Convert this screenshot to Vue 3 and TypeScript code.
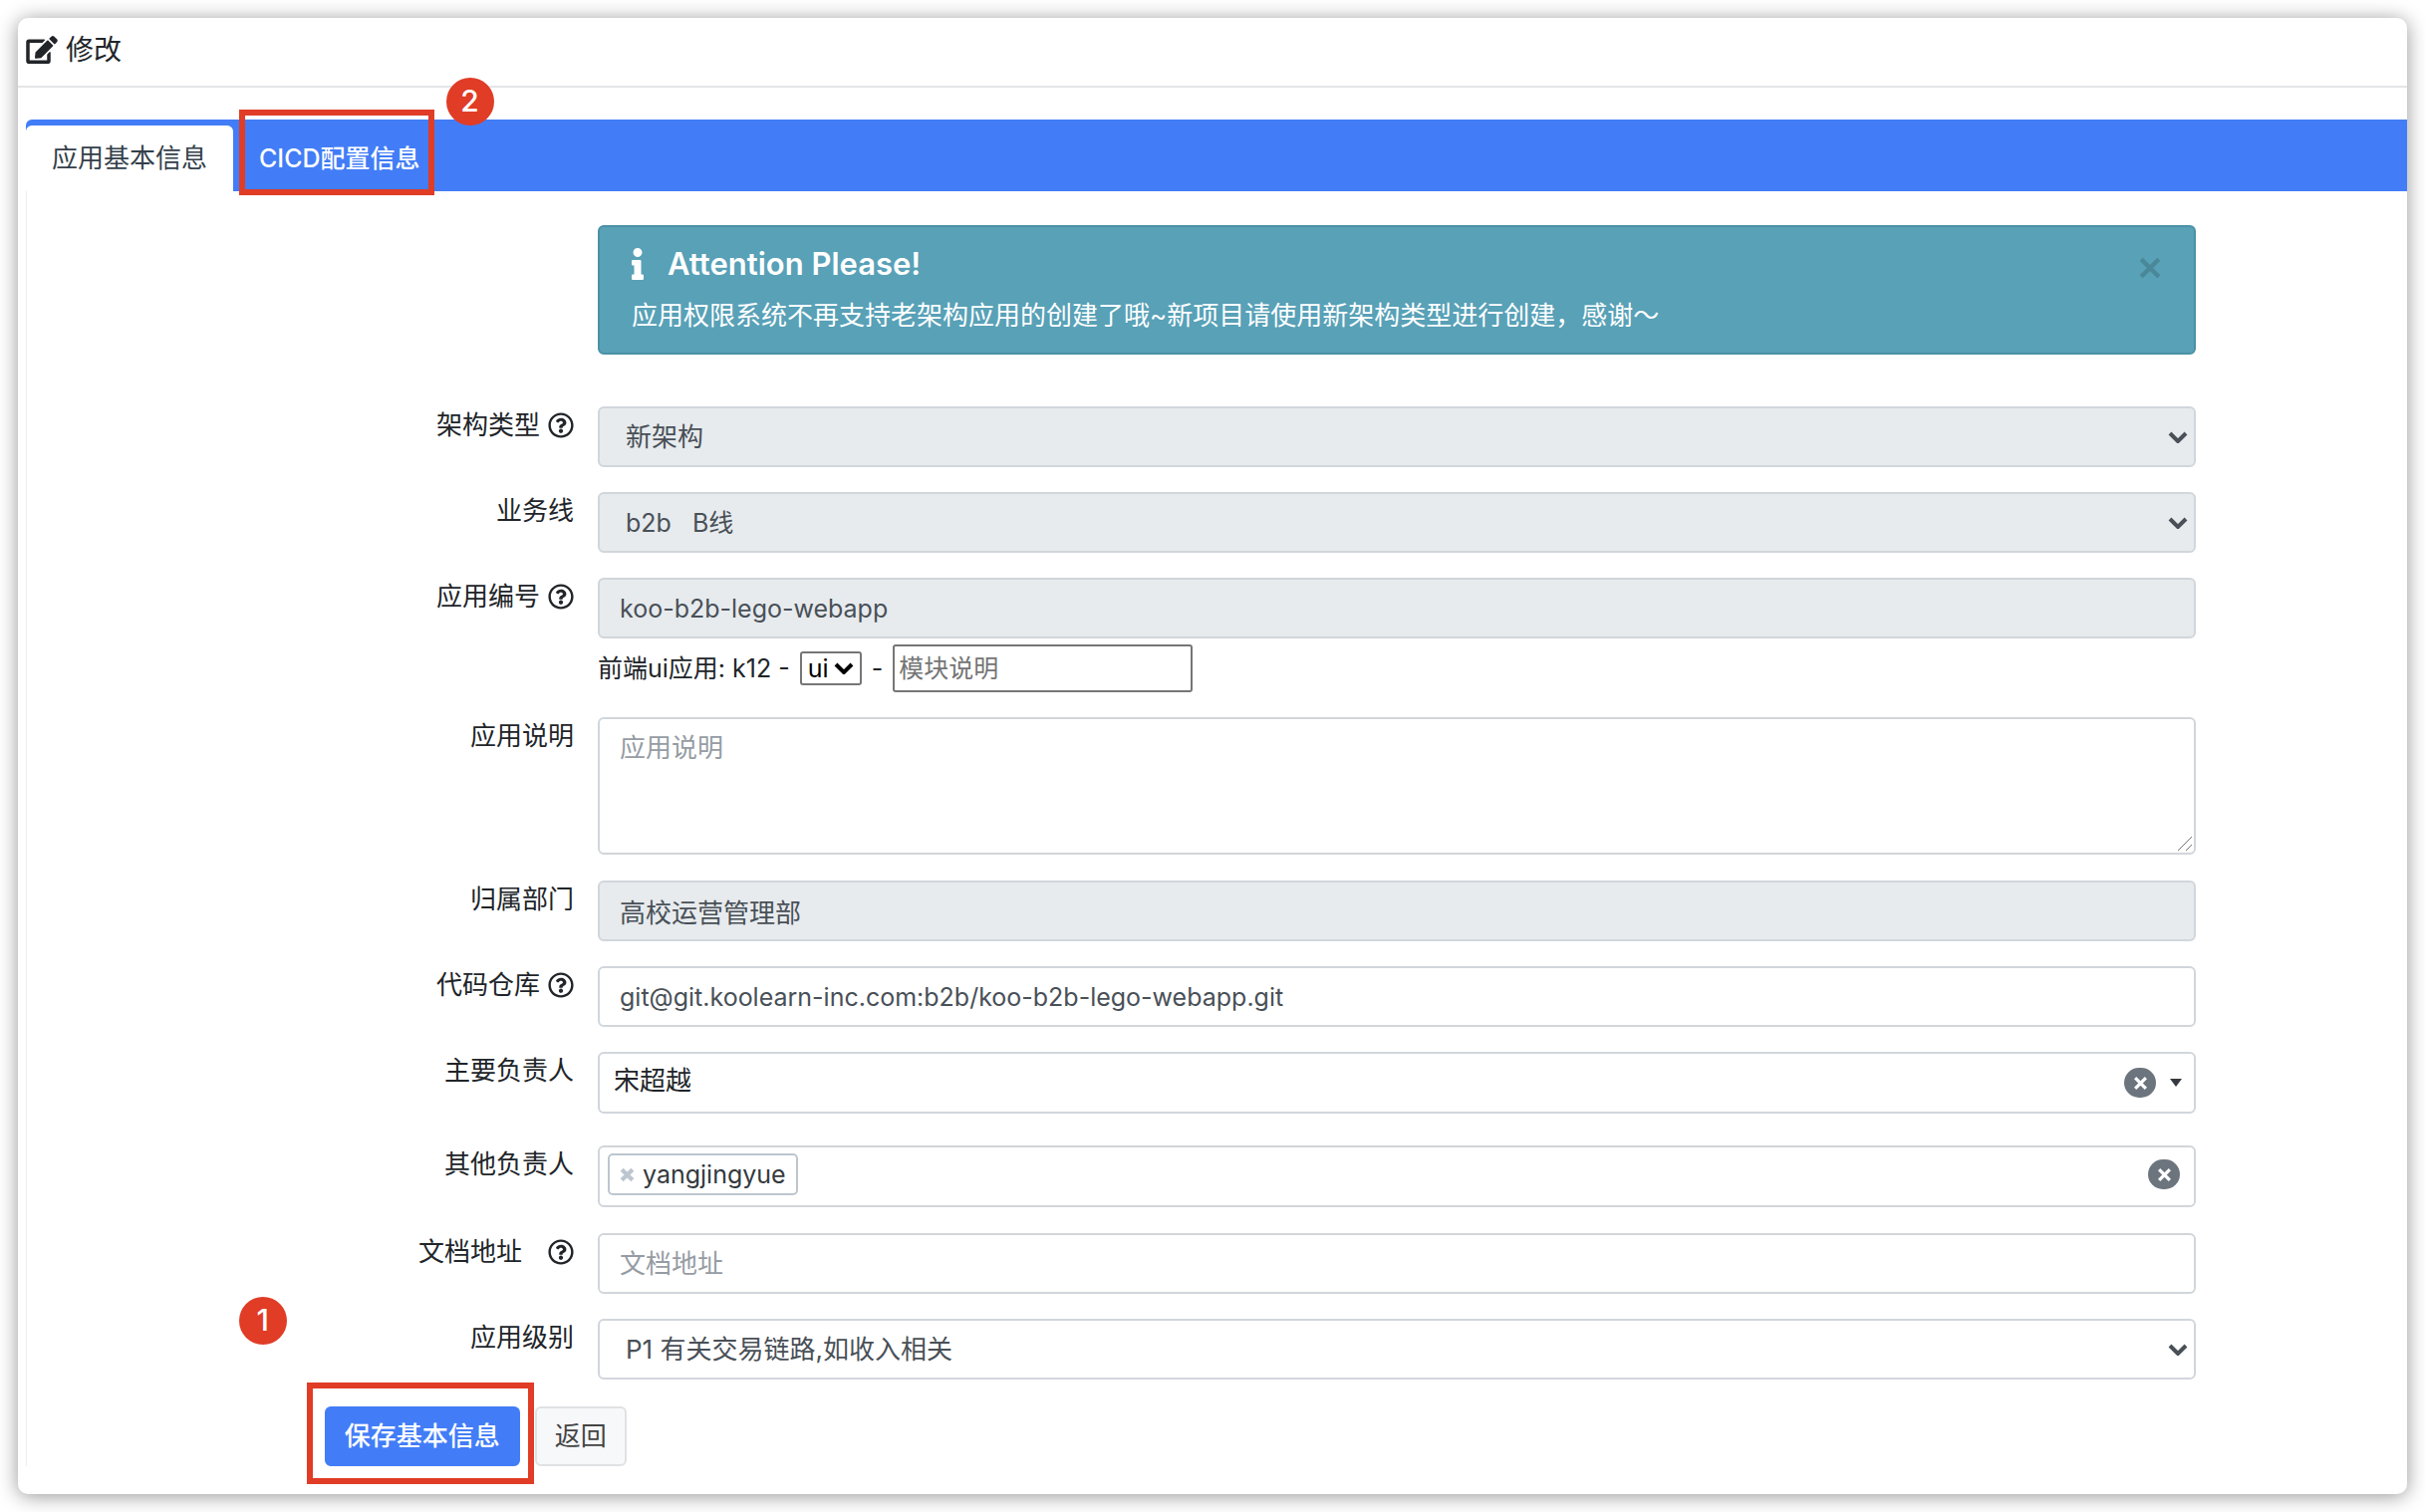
<script setup lang="ts">
import { ref } from 'vue'

const activeTab = ref<'basic' | 'cicd'>('basic')
const alertVisible = ref(true)

const archType = ref('new')
const bizLine = ref('b2b')
const appCode = ref('koo-b2b-lego-webapp')
const uiType = ref('ui')
const moduleName = ref('')
const description = ref('')
const department = ref('高校运营管理部')
const repository = ref('git@git.koolearn-inc.com:b2b/koo-b2b-lego-webapp.git')
const owner = ref('宋超越')
const otherOwners = ref<string[]>(['yangjingyue'])
const ownerQuery = ref('')
const docUrl = ref('')
const level = ref('P1')

const helpIcon =
  'M256 8C119 8 8 119 8 256s111 248 248 248 248-111 248-248S393 8 256 8zm0 448c-111 0-200-90-200-200S145 56 256 56s200 89 200 200-89 200-200 200zm107-255c0 67-72 68-72 93v6c0 7-5 12-12 12h-46c-7 0-12-5-12-12v-9c0-35 27-49 47-60 17-10 28-17 28-30 0-17-22-29-40-29-23 0-34 11-49 30-4 5-12 6-17 2l-28-21c-5-4-6-11-3-16 24-35 54-55 102-55 50 0 102 39 102 89zm-65 167c0 23-19 42-42 42s-42-19-42-42 19-42 42-42 42 19 42 42z'

function removeOwner(name: string): void {
  otherOwners.value = otherOwners.value.filter((item) => item !== name)
}
</script>

<template>
  <main class="card">
    <header class="card-header">
      <svg class="edit-icon" viewBox="0 0 576 512" aria-hidden="true">
        <path
          d="M402.600 83.200l90.200 90.200c3.800 3.800 3.800 10 0 13.800L274.400 405.600l-92.800 10.300c-12.400 1.400-22.900-9.100-21.500-21.500l10.300-92.800L388.800 83.200c3.800-3.800 10-3.800 13.800 0zm162-22.900l-48.800-48.800c-15.200-15.200-39.900-15.200-55.200 0l-35.400 35.400c-3.800 3.800-3.800 10 0 13.800l90.200 90.200c3.800 3.800 10 3.800 13.800 0l35.400-35.400c15.200-15.300 15.200-40 0-55.200zM384 346.200V448H64V128h229.800c3.200 0 6.200-1.300 8.500-3.500l40-40c7.600-7.600 2.200-20.500-8.500-20.500H48C21.500 64 0 85.500 0 112v352c0 26.500 21.500 48 48 48h352c26.500 0 48-21.500 48-48V306.200c0-10.700-12.900-16-20.500-8.500l-40 40c-2.200 2.300-3.500 5.300-3.500 8.500z"
        />
      </svg>
      <h1>修改</h1>
    </header>

    <div class="card-body">
      <nav class="tabs" role="tablist">
        <button
          type="button"
          role="tab"
          class="tab"
          :class="{ active: activeTab === 'basic' }"
          @click="activeTab = 'basic'"
        >
          应用基本信息
        </button>
        <button
          type="button"
          role="tab"
          class="tab marked latin"
          :class="{ active: activeTab === 'cicd' }"
          @click="activeTab = 'cicd'"
        >
          CICD配置信息
          <span class="outline tab-outline"></span>
          <span class="badge tab-badge">2</span>
        </button>
      </nav>

      <form class="form" @submit.prevent>
        <div class="row alert-row">
          <section v-if="alertVisible" class="alert field" role="alert">
            <h2>
              <svg class="info-icon" viewBox="0 0 192 512" aria-hidden="true">
                <path
                  d="M20 424.200h20V279.800H20c-11 0-20-9-20-20V212c0-11 9-20 20-20h112c11 0 20 9 20 20v212.200h20c11 0 20 9 20 20V492c0 11-9 20-20 20H20c-11 0-20-9-20-20v-47.800c0-11 9-20 20-20zM96 0C56.200 0 24 32.200 24 72s32.200 72 72 72 72-32.200 72-72S135.800 0 96 0z"
                />
              </svg>
              Attention Please!
            </h2>
            <p>应用权限系统不再支持老架构应用的创建了哦~新项目请使用新架构类型进行创建，感谢～</p>
            <button type="button" class="alert-close" aria-label="关闭" @click="alertVisible = false">
              <svg viewBox="0 0 20 20" aria-hidden="true"><path d="M2 2l16 16M18 2L2 18" /></svg>
            </button>
          </section>
        </div>

        <div class="row">
          <label for="arch">架构类型<svg class="help" viewBox="0 0 512 512"><path :d="helpIcon" /></svg></label>
          <div class="field select-wrap">
            <select id="arch" v-model="archType" class="control" disabled>
              <option value="new">新架构</option>
            </select>
            <svg class="chevron" viewBox="0 0 20 12" aria-hidden="true"><path d="M2 2l8 8 8-8" /></svg>
          </div>
        </div>

        <div class="row">
          <label for="biz">业务线</label>
          <div class="field select-wrap">
            <select id="biz" v-model="bizLine" class="control latin" disabled>
              <option value="b2b">b2b&nbsp;&nbsp; B线</option>
            </select>
            <svg class="chevron" viewBox="0 0 20 12" aria-hidden="true"><path d="M2 2l8 8 8-8" /></svg>
          </div>
        </div>

        <div class="row">
          <label for="code">应用编号<svg class="help" viewBox="0 0 512 512"><path :d="helpIcon" /></svg></label>
          <div class="field">
            <input id="code" v-model="appCode" type="text" class="control latin" disabled />
            <div class="module-line latin">
              <span>前端ui应用: k12 -</span>
              <span class="mini-wrap">
                <select v-model="uiType" class="mini-select" aria-label="应用类型">
                  <option value="ui">ui</option>
                </select>
                <svg class="mini-chevron" viewBox="0 0 20 12" aria-hidden="true"><path d="M2 2l8 8 8-8" /></svg>
              </span>
              <span>-</span>
              <input v-model="moduleName" type="text" class="mini-input" placeholder="模块说明" aria-label="模块说明" />
            </div>
          </div>
        </div>

        <div class="row text-row">
          <label for="desc">应用说明</label>
          <div class="field area-wrap">
            <textarea id="desc" v-model="description" class="control" placeholder="应用说明"></textarea>
            <svg class="grip" viewBox="0 0 14 14" aria-hidden="true"><path d="M0 14L14 0M8 14l6-6" /></svg>
          </div>
        </div>

        <div class="row">
          <label for="dept">归属部门</label>
          <div class="field">
            <input id="dept" v-model="department" type="text" class="control" disabled />
          </div>
        </div>

        <div class="row">
          <label for="repo">代码仓库<svg class="help" viewBox="0 0 512 512"><path :d="helpIcon" /></svg></label>
          <div class="field">
            <input id="repo" v-model="repository" type="text" class="control latin" />
          </div>
        </div>

        <div class="row owner-row">
          <label for="owner">主要负责人</label>
          <div class="field combo">
            <input id="owner" v-model="owner" type="text" class="combo-input" />
            <button type="button" class="clear" aria-label="清除" @click="owner = ''">
              <svg viewBox="0 0 14 14" aria-hidden="true"><path d="M2 2l10 10M12 2L2 12" /></svg>
            </button>
            <span class="caret"></span>
          </div>
        </div>

        <div class="row text-row">
          <label for="others">其他负责人</label>
          <div class="field combo multi">
            <span v-for="name in otherOwners" :key="name" class="chip latin">
              <button type="button" :aria-label="'移除 ' + name" @click="removeOwner(name)">
                <svg viewBox="0 0 14 14" aria-hidden="true"><path d="M2 2l10 10M12 2L2 12" /></svg>
              </button>
              {{ name }}
            </span>
            <input id="others" v-model="ownerQuery" type="text" class="combo-input" />
            <button type="button" class="clear" aria-label="清除" @click="otherOwners = []">
              <svg viewBox="0 0 14 14" aria-hidden="true"><path d="M2 2l10 10M12 2L2 12" /></svg>
            </button>
          </div>
        </div>

        <div class="row">
          <label for="doc" class="spaced">文档地址<svg class="help" viewBox="0 0 512 512"><path :d="helpIcon" /></svg></label>
          <div class="field">
            <input id="doc" v-model="docUrl" type="text" class="control" placeholder="文档地址" />
          </div>
        </div>

        <div class="row">
          <label for="level">应用级别</label>
          <div class="field select-wrap">
            <select id="level" v-model="level" class="control">
              <option value="P1">P1 有关交易链路,如收入相关</option>
            </select>
            <svg class="chevron" viewBox="0 0 20 12" aria-hidden="true"><path d="M2 2l8 8 8-8" /></svg>
          </div>
        </div>

        <div class="actions">
          <div class="marked">
            <button type="submit" class="btn primary">保存基本信息</button>
            <span class="outline save-outline"></span>
            <span class="badge save-badge">1</span>
          </div>
          <button type="button" class="btn plain">返回</button>
        </div>
      </form>
    </div>
  </main>
</template>

<style>
body {
  background: #fff;
}
</style>

<style scoped>
* {
  box-sizing: border-box;
}

.card {
  margin: 18px;
  border-radius: 10px;
  background: #fff;
  box-shadow: 0 2px 20px rgba(0, 0, 0, 0.42);
  color: #212529;
  font-family: Inter, 'Noto Sans CJK SC', sans-serif;
  font-size: 26px;
  line-height: 38px;
}

button,
input,
select,
textarea {
  margin: 0;
  font: inherit;
}

/* Inter runs wide, so mixed and Latin strings are set one step smaller */
.latin {
  font-size: 25px;
}

.card-header {
  display: flex;
  align-items: center;
  gap: 8px;
  height: 70px;
  padding: 0 8px;
  border-bottom: 2px solid #e4e5e6;
}

.card-header h1 {
  margin: 0;
  padding-bottom: 4px;
  font-size: 28px;
  font-weight: 400;
}

.edit-icon {
  width: 32px;
  height: 28px;
  margin-bottom: 4px;
  fill: #212529;
}

.card-body {
  padding: 32px 0 28px 8px;
}

.tabs {
  display: flex;
  height: 72px;
  padding-top: 6px;
  border-radius: 6px 0 0 0;
  background: #427df7;
}

.tab {
  padding: 0 26px;
  border: 0;
  border-radius: 6px 6px 0 0;
  background: none;
  color: #fff;
  font-weight: 500;
}

.tab.active {
  background: #fff;
  color: #343f4b;
  font-weight: 400;
}

.marked {
  position: relative;
}

.outline {
  position: absolute;
  border: 6px solid #e03c26;
  pointer-events: none;
}

.badge {
  position: absolute;
  width: 48px;
  height: 48px;
  border-radius: 50%;
  background: #e03c26;
  color: #fff;
  font-size: 30px;
  font-weight: 500;
  line-height: 46px;
  text-align: center;
}

.tab-outline {
  inset: -16px 12px -4px 6px;
}

.tab-badge {
  top: -48px;
  right: -48px;
}

.form {
  padding-top: 34px;
  border-left: 1px solid #eceef0;
}

.row {
  display: grid;
  grid-template-columns: 573fr 1604fr 212fr;
  margin-bottom: 25px;
}

.text-row {
  margin-bottom: 26px;
}

.row > label {
  display: flex;
  align-items: center;
  justify-content: flex-end;
  gap: 8px;
  height: 38px;
  padding-right: 24px;
}

.row > label.spaced {
  gap: 26px;
}

.help {
  width: 26px;
  height: 26px;
  fill: #212529;
}

.field {
  grid-column: 2;
  min-width: 0;
}

.alert-row {
  margin-bottom: 52px;
}

.alert {
  position: relative;
  height: 130px;
  padding: 18px 32px;
  border: 2px solid #4b91a6;
  border-radius: 6px;
  background: #58a1b7;
  color: #fff;
}

.alert h2 {
  display: flex;
  align-items: center;
  gap: 24px;
  margin: 0 0 15px;
  font-size: 31px;
  font-weight: 600;
}

.info-icon {
  width: 12px;
  height: 32px;
  fill: #fff;
}

.alert p {
  margin: 0;
  line-height: 36px;
}

.alert-close {
  position: absolute;
  top: 30px;
  right: 33px;
  display: flex;
  padding: 0;
  border: 0;
  background: none;
}

.alert-close svg {
  width: 22px;
  height: 22px;
  fill: none;
  stroke: #4a8798;
  stroke-width: 4;
}

.control {
  display: block;
  width: 100%;
  height: 61px;
  padding: 0 20px;
  border: 2px solid #d1d6db;
  border-radius: 6px;
  outline: 0;
  background: #fff;
  color: #495057;
}

.control:disabled {
  background: #e7ebee;
  color: #495057;
  opacity: 1;
}

.control::placeholder {
  color: #959ca3;
}

textarea.control {
  height: 138px;
  padding-top: 10px;
  resize: vertical;
}

textarea.control::-webkit-resizer {
  background: transparent;
}

.select-wrap,
.area-wrap,
.mini-wrap {
  position: relative;
}

.grip {
  position: absolute;
  right: 4px;
  bottom: 4px;
  width: 14px;
  height: 14px;
  fill: none;
  stroke: #777;
  stroke-width: 1;
  pointer-events: none;
}

select {
  appearance: none;
}

select.control {
  padding: 0 26px;
}

.chevron,
.mini-chevron {
  position: absolute;
  top: 50%;
  right: 8px;
  width: 20px;
  height: 12px;
  margin-top: -6px;
  fill: none;
  stroke: #495057;
  stroke-width: 4;
  pointer-events: none;
}

.module-line {
  display: flex;
  align-items: center;
  gap: 10px;
  height: 48px;
  margin-top: 6px;
}

.mini-wrap {
  display: flex;
}

.mini-select {
  width: 62px;
  height: 34px;
  padding: 0 6px;
  border: 2px solid #767676;
  border-radius: 3px;
  background: #fff;
  color: #000;
  line-height: 30px;
}

.mini-chevron {
  stroke: #000;
}

.mini-input {
  width: 301px;
  height: 48px;
  padding: 0 4px;
  border: 2px solid #767676;
  border-radius: 3px;
  background: #fff;
}

.mini-input::placeholder {
  color: #757575;
}

.owner-row {
  margin-bottom: 32px;
}

.combo {
  display: flex;
  align-items: center;
  height: 62px;
  padding: 0 12px 0 14px;
  border: 2px solid #d1d6db;
  border-radius: 6px;
}

.combo.multi {
  padding: 0 14px 4px 8px;
}

.combo-input {
  flex: 1;
  min-width: 0;
  padding: 0 0 4px;
  border: 0;
  outline: 0;
  background: none;
  color: #212529;
}

.clear {
  display: flex;
  align-items: center;
  justify-content: center;
  width: 32px;
  height: 30px;
  padding: 0;
  border: 0;
  border-radius: 15px;
  background: #6c757d;
}

.clear svg {
  width: 15px;
  height: 15px;
  fill: none;
  stroke: #fff;
  stroke-width: 3;
}

.caret {
  margin-left: 14px;
  border-top: 8px solid #343a40;
  border-right: 6px solid transparent;
  border-left: 6px solid transparent;
}

.chip {
  display: flex;
  align-items: center;
  gap: 8px;
  height: 42px;
  padding: 0 10px;
  border: 2px solid #bdc6d0;
  border-radius: 5px;
  color: #343a40;
}

.chip button {
  display: flex;
  padding: 0;
  border: 0;
  background: none;
}

.chip svg {
  width: 15px;
  height: 15px;
  fill: none;
  stroke: #bdc6d0;
  stroke-width: 4;
}

.actions {
  display: flex;
  gap: 15px;
  padding: 2px 0 0 12.5%;
}

.btn {
  display: block;
  height: 60px;
  padding: 0 18px;
  border: 2px solid #427df7;
  border-radius: 6px;
}

.btn.primary {
  background: #427df7;
  color: #fff;
  font-weight: 500;
}

.btn.plain {
  border-color: #dfe1e3;
  background: #f7f8fa;
  color: #444;
}

.save-outline {
  inset: -24px -14px -18px -18px;
}

.save-badge {
  top: -110px;
  left: -86px;
}
</style>
